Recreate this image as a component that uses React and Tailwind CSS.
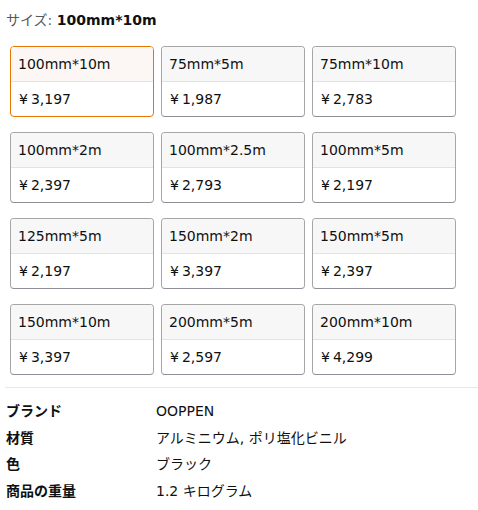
import React from "react";

const sizes = [
  { name: "100mm*10m", price: "3,197", selected: true },
  { name: "75mm*5m", price: "1,987" },
  { name: "75mm*10m", price: "2,783" },
  { name: "100mm*2m", price: "2,397" },
  { name: "100mm*2.5m", price: "2,793" },
  { name: "100mm*5m", price: "2,197" },
  { name: "125mm*5m", price: "2,197" },
  { name: "150mm*2m", price: "3,397" },
  { name: "150mm*5m", price: "2,397" },
  { name: "150mm*10m", price: "3,397" },
  { name: "200mm*5m", price: "2,597" },
  { name: "200mm*10m", price: "4,299" },
];

const specs = [
  ["ブランド", "OOPPEN"],
  ["材質", "アルミニウム, ポリ塩化ビニル"],
  ["色", "ブラック"],
  ["商品の重量", "1.2 キログラム"],
];

const App = () => {
  return (
    <div
      className="w-[478px] h-[510px] bg-white text-[#0f1111] text-[14px]"
      style={{ fontFamily: '"DejaVu Sans", "Noto Sans CJK JP", sans-serif' }}
    >
      <div className="pt-[10px] pl-[6px] leading-[20px]">
        <span className="text-[#565959]">サイズ: </span>
        <span className="font-bold">100mm*10m</span>
      </div>

      <div className="mt-[16px] ml-[10px] grid grid-cols-[144px_144px_144px] gap-x-[7px] gap-y-[15px]">
        {sizes.map((s) => (
          <div
            key={s.name}
            className={
              s.selected
                ? "h-[71px] rounded-[4px] border border-[#e77600] overflow-hidden flex flex-col"
                : "h-[71px] rounded-[4px] border border-[#a6a6a6] border-b-[#8d9096] overflow-hidden flex flex-col"
            }
          >
            <div
              className={
                s.selected
                  ? "h-[35px] bg-[#fcf7f4] border-b border-[#e3e3e3] flex items-center pl-[7px]"
                  : "h-[35px] bg-[#f7f7f7] border-b border-[#e3e3e3] flex items-center pl-[7px]"
              }
            >
              {s.name}
            </div>
            <div className="flex-1 flex items-center pl-[8px]">
              <span className="mr-[3px]">¥</span>
              {s.price}
            </div>
          </div>
        ))}
      </div>

      <div className="mt-[12px] ml-[5px] h-px bg-[#e7e7e7]" />

      <div className="pt-[10px] pl-[6px]">
        {specs.map(([k, v]) => (
          <div key={k} className="flex h-[26.7px] items-center">
            <div className="w-[150px] font-bold">{k}</div>
            <div>{v}</div>
          </div>
        ))}
      </div>
    </div>
  );
};

export default App;
